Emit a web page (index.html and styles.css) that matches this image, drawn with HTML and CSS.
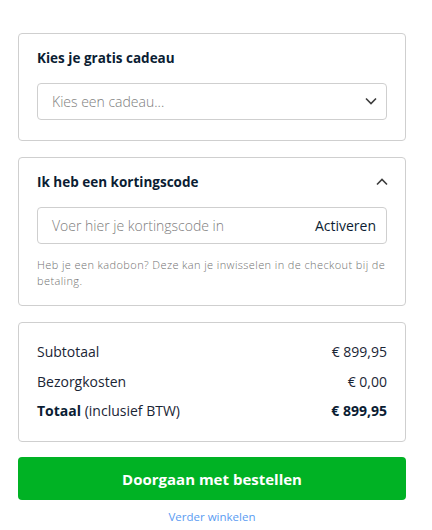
FILE: index.html
```html
<!DOCTYPE html>
<html lang="nl">
<head>
<meta charset="utf-8">
<link rel="stylesheet" href="styles.css">
</head>
<body>
<div class="page">
  <section class="card">
    <h2 class="card-title">Kies je gratis cadeau</h2>
    <div class="field select">
      <span class="placeholder">Kies een cadeau...</span>
      <svg class="chev" width="12" height="8" viewBox="0 0 12 8"><path d="M1 1.5 L6 6.5 L11 1.5" fill="none" stroke="#3d3d3d" stroke-width="1.6"/></svg>
    </div>
  </section>

  <section class="card code-card">
    <div class="card-head">
      <h2 class="card-title">Ik heb een kortingscode</h2>
      <svg class="chev up" width="12" height="8" viewBox="0 0 12 8"><path d="M1 6.5 L6 1.5 L11 6.5" fill="none" stroke="#3d3d3d" stroke-width="1.6"/></svg>
    </div>
    <div class="field code">
      <span class="placeholder">Voer hier je kortingscode in</span>
      <span class="activate">Activeren</span>
    </div>
    <p class="help">Heb je een kadobon? Deze kan je inwisselen in de checkout bij de betaling.</p>
  </section>

  <section class="card totals">
    <div class="row"><span>Subtotaal</span><span>€ 899,95</span></div>
    <div class="row"><span>Bezorgkosten</span><span>€ 0,00</span></div>
    <div class="row total"><span><b>Totaal</b> (inclusief BTW)</span><b>€ 899,95</b></div>
  </section>

  <button class="cta">Doorgaan met bestellen</button>
  <a class="back" href="#">Verder winkelen</a>
</div>
</body>
</html>
```
FILE: styles.css
```css
* { box-sizing: border-box; }
html, body { margin: 0; background: #fff; }
body {
  font-family: "Open Sans", "Liberation Sans", sans-serif;
  color: #0d1b2a;
}
.page {
  padding: 33px 26px 0 18px;
  display: flex;
  flex-direction: column;
}
.card {
  border: 1px solid #cfcfcf;
  border-radius: 4px;
  padding: 15px 18px 20px;
  margin-bottom: 16px;
}
.card-title {
  margin: 0;
  font-size: 13.5px;
  font-weight: 700;
  line-height: 18px;
  color: #0b1d33;
}
.card-head {
  display: flex;
  justify-content: space-between;
  align-items: flex-start;
}
.chev.up { margin-top: 5px; margin-right: -1px; }
.field {
  margin-top: 16px;
  height: 37px;
  border: 1px solid #cfcfcf;
  border-radius: 4px;
  display: flex;
  align-items: center;
  justify-content: space-between;
  padding: 0 9px 0 14px;
}
.field.code { padding-right: 10px; }
.select .chev { margin-top: -1px; }
.placeholder {
  font-size: 14px;
  color: #7d7d7d;
  font-weight: 300;
}
.activate {
  font-size: 14px;
  color: #0b1d33;
}
.code-card { padding-bottom: 16px; }
.help {
  margin: 13px 0 0;
  font-size: 11px;
  letter-spacing: 0.4px;
  line-height: 16px;
  color: #727272;
  font-weight: 300;
}
.totals { padding: 20px 18px 21px; margin-bottom: 15px; }
.row {
  display: flex;
  justify-content: space-between;
  font-size: 14px;
  line-height: 18px;
  color: #1a2535;
}
.row + .row { margin-top: 11.5px; }
.row b { font-weight: 700; color: #0b1d33; }
.cta {
  height: 43px;
  border: 0;
  border-radius: 4px;
  background: #00b224;
  color: #fff;
  font-family: inherit;
  font-size: 15px;
  font-weight: 700;
}
.back {
  margin-top: 9px;
  align-self: center;
  font-size: 11.5px;
  line-height: 16px;
  color: #5b9cf2;
  text-decoration: none;
}
```
